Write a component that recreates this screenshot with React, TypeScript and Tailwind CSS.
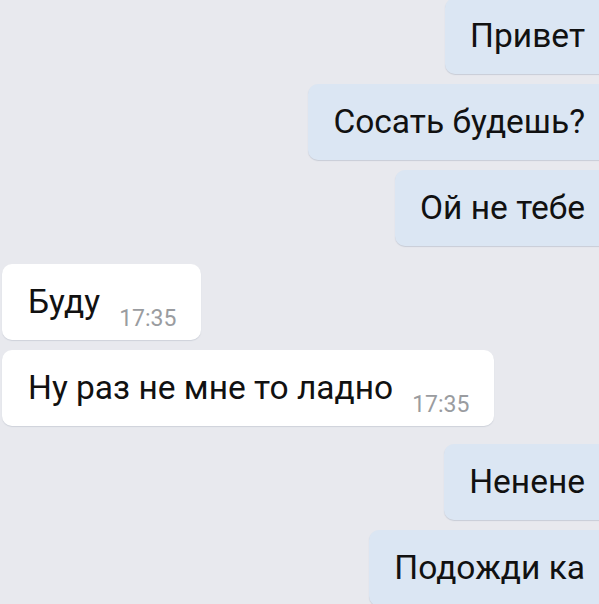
const font = { fontFamily: "Roboto, 'Noto Sans', sans-serif" };

type Msg = { text: string; out: boolean; time?: string; gapTop: number };

const messages: Msg[] = [
  { text: "Привет", out: true, gapTop: 0 },
  { text: "Сосать будешь?", out: true, gapTop: 10 },
  { text: "Ой не тебе", out: true, gapTop: 10 },
  { text: "Буду", out: false, time: "17:35", gapTop: 18 },
  { text: "Ну раз не мне то ладно", out: false, time: "17:35", gapTop: 10 },
  { text: "Ненене", out: true, gapTop: 18 },
  { text: "Подожди ка", out: true, gapTop: 10 },
];

function Bubble({ m }: { m: Msg }) {
  if (m.out) {
    return (
      <div className="self-end mr-[-12px] h-[76px] flex items-center pl-[25px] pr-[26px] rounded-[10px] bg-[#dbe6f3] shadow-[0_1px_1px_rgba(60,80,110,0.18)]">
        <span className="text-[33.5px] leading-none text-[#111]">{m.text}</span>
      </div>
    );
  }
  return (
    <div className="self-start ml-[2px] h-[76px] flex items-center pl-[26px] pr-[25px] rounded-[10px] bg-white shadow-[0_1px_1px_rgba(60,80,110,0.15)]">
      <span className="text-[33.5px] leading-none text-[#111]">{m.text}</span>
      <span className="ml-[19px] mt-[33px] text-[23px] leading-none text-[#9a9ca0]">{m.time}</span>
    </div>
  );
}

export default function App() {
  return (
    <div style={font} className="w-[599px] h-[604px] overflow-hidden bg-[#e8e9ee]">
      <div className="flex flex-col mt-[-2px]">
        {messages.map((m, i) => (
          <div key={i} className="flex flex-col" style={{ marginTop: m.gapTop }}>
            <Bubble m={m} />
          </div>
        ))}
      </div>
    </div>
  );
}
